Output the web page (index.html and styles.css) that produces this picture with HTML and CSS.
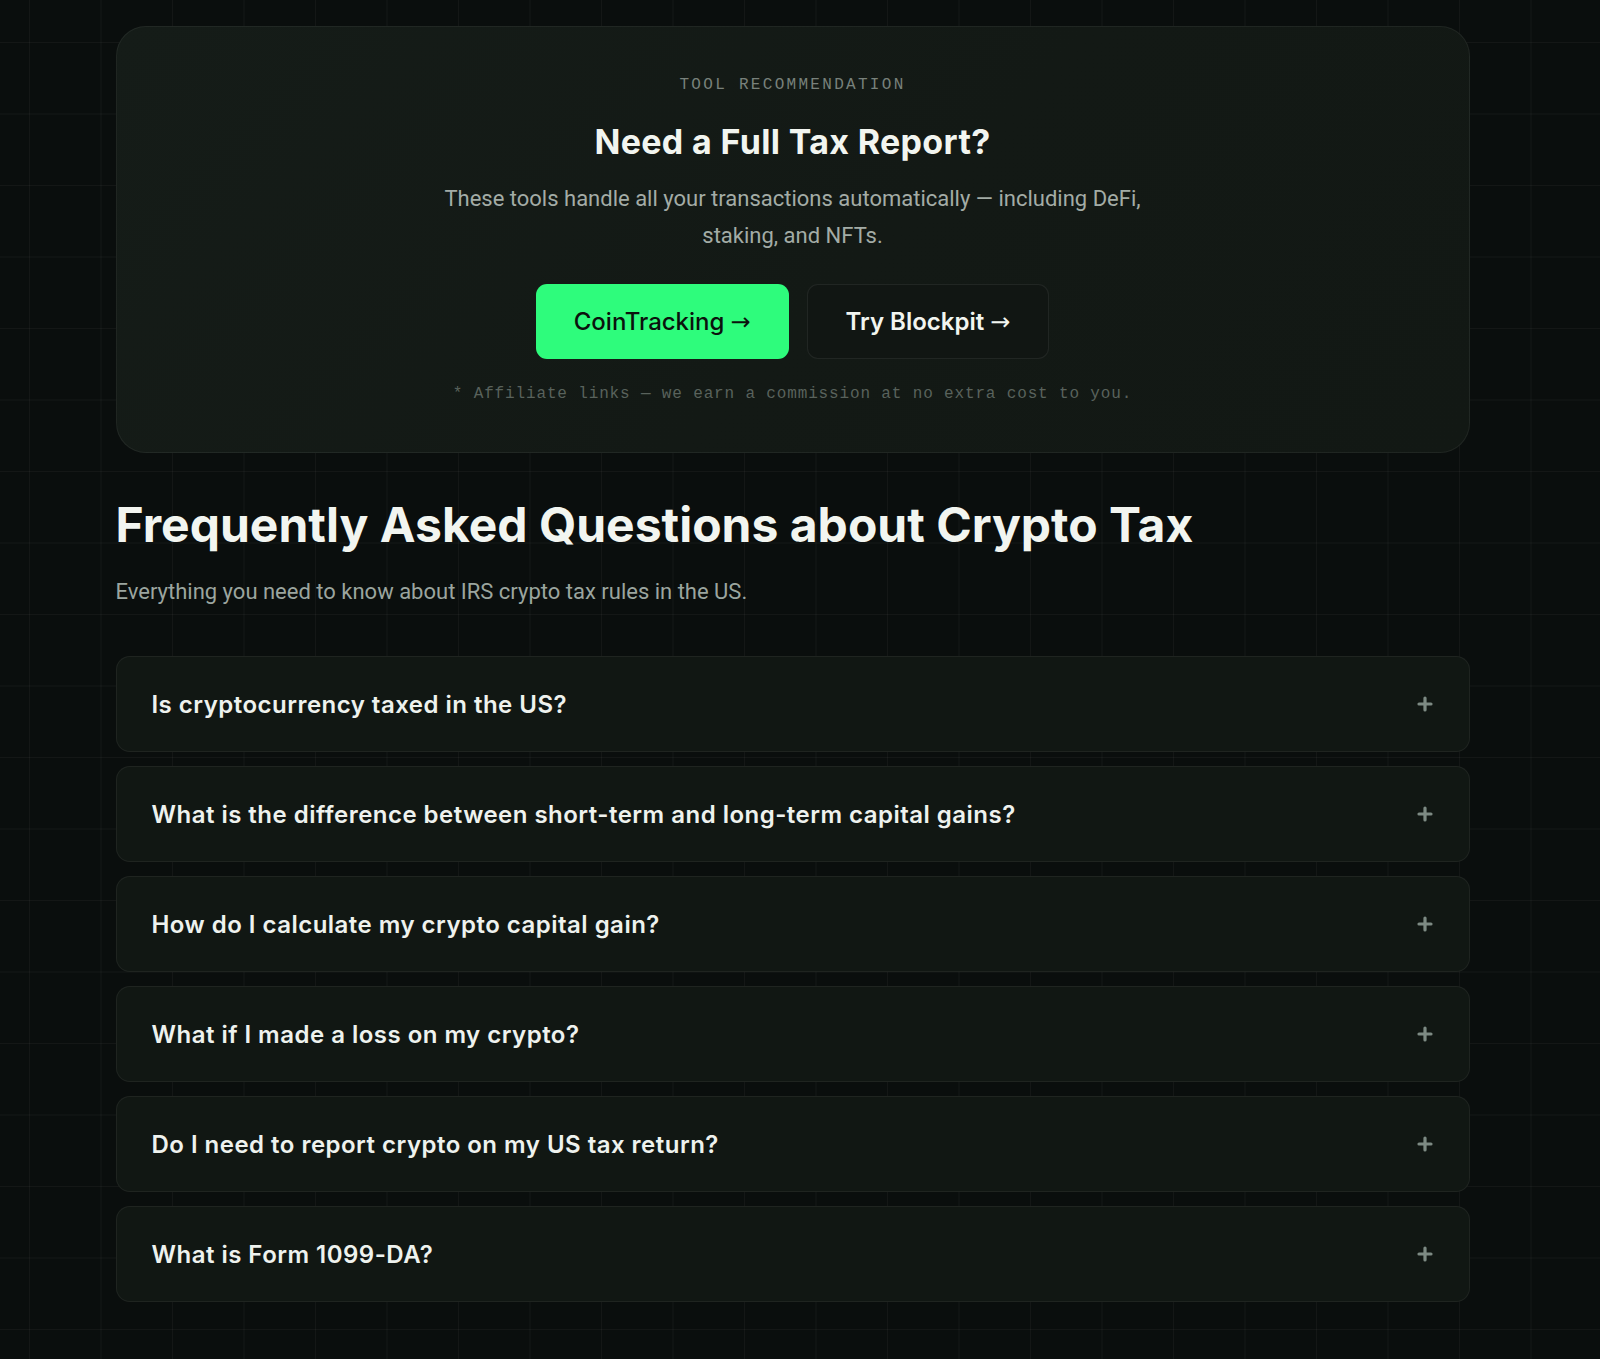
FILE: index.html
```html
<!DOCTYPE html>
<html lang="en">
<head>
  <meta charset="UTF-8">
  <meta name="viewport" content="width=device-width, initial-scale=1.0">
  <title>Crypto Tax FAQ</title>
  <link rel="stylesheet" href="styles.css">
</head>
<body>
  <div class="page">

    <section class="promo">
      <p class="promo-label">TOOL RECOMMENDATION</p>
      <h2 class="promo-title">Need a Full Tax Report?</h2>
      <p class="promo-text">These tools handle all your transactions automatically — including DeFi, staking, and NFTs.</p>
      <div class="promo-actions">
        <a href="#" class="btn btn-primary">CoinTracking <span class="arrow">→</span></a>
        <a href="#" class="btn btn-ghost">Try Blockpit <span class="arrow">→</span></a>
      </div>
      <p class="promo-note">* Affiliate links — we earn a commission at no extra cost to you.</p>
    </section>

    <section class="faq">
      <h2 class="faq-title">Frequently Asked Questions about Crypto Tax</h2>
      <p class="faq-sub">Everything you need to know about IRS crypto tax rules in the US.</p>

      <div class="faq-list">
        <div class="faq-item">
          <span class="faq-q">Is cryptocurrency taxed in the US?</span>
          <svg class="faq-plus" viewBox="0 0 16 16"><path d="M8 2v12M2 8h12"/></svg>
        </div>
        <div class="faq-item">
          <span class="faq-q">What is the difference between short-term and long-term capital gains?</span>
          <svg class="faq-plus" viewBox="0 0 16 16"><path d="M8 2v12M2 8h12"/></svg>
        </div>
        <div class="faq-item">
          <span class="faq-q">How do I calculate my crypto capital gain?</span>
          <svg class="faq-plus" viewBox="0 0 16 16"><path d="M8 2v12M2 8h12"/></svg>
        </div>
        <div class="faq-item">
          <span class="faq-q">What if I made a loss on my crypto?</span>
          <svg class="faq-plus" viewBox="0 0 16 16"><path d="M8 2v12M2 8h12"/></svg>
        </div>
        <div class="faq-item">
          <span class="faq-q">Do I need to report crypto on my US tax return?</span>
          <svg class="faq-plus" viewBox="0 0 16 16"><path d="M8 2v12M2 8h12"/></svg>
        </div>
        <div class="faq-item">
          <span class="faq-q">What is Form 1099-DA?</span>
          <svg class="faq-plus" viewBox="0 0 16 16"><path d="M8 2v12M2 8h12"/></svg>
        </div>
      </div>
    </section>

  </div>
</body>
</html>
```

FILE: styles.css
```css
html {
background-color: #0a0e0d;
}
body {
margin: 0;
padding: 26px 15px 0 0;
min-height: 1359px;
box-sizing: border-box;
font-family: Roboto, "Noto Sans", sans-serif;
color: #eef2ee;
background-color: #0a0e0d;
background-image:
  linear-gradient(rgba(255, 255, 255, 0.04) 1px, transparent 1px),
  linear-gradient(90deg, rgba(255, 255, 255, 0.04) 1px, transparent 1px);
background-size: 71.5px 71.5px;
background-position: 29px 42px;
}
a {
text-decoration: none;
}

.page {
width: 1354px;
margin: 0 auto;
}

/* tool recommendation card */
.promo {
background: linear-gradient(135deg, #151c18 0%, #131915 55%, #121814 100%);
border: 1px solid rgba(255, 255, 255, 0.06);
border-radius: 30px;
padding: 48px 48px 48px;
text-align: center;
}
.promo-label {
margin: 0;
font-family: "Liberation Mono", "DejaVu Sans Mono", monospace;
font-size: 16px;
line-height: 20px;
letter-spacing: 2.3px;
color: #78817b;
}
.promo-title {
margin: 27px 0 0;
font-family: Inter, sans-serif;
font-size: 34px;
line-height: 40px;
font-weight: 700;
letter-spacing: 0.01em;
color: #f2f5f0;
}
.promo-text {
max-width: 720px;
margin: 18px auto 0;
font-size: 22px;
line-height: 37px;
color: #a3aca6;
}
.promo-actions {
display: flex;
justify-content: center;
gap: 18px;
margin-top: 30px;
}
.btn {
display: flex;
align-items: center;
gap: 6px;
height: 75px;
box-sizing: border-box;
padding: 0 38px;
border-radius: 11px;
font-family: Inter, sans-serif;
font-size: 24px;
font-weight: 500;
}
.btn .arrow {
font-family: "DejaVu Sans", sans-serif;
font-weight: 400;
font-size: 24px;
}
.btn-primary {
background-color: #2efc7c;
color: #0b120d;
}
.btn-ghost {
background-color: #111613;
border: 1px solid rgba(255, 255, 255, 0.07);
color: #f2f5f0;
font-weight: 600;
}
.promo-note {
margin: 25px 0 0;
font-family: "Liberation Mono", "DejaVu Sans Mono", monospace;
font-size: 16px;
line-height: 20px;
letter-spacing: 0.85px;
color: #59625c;
}

/* faq */
.faq-title {
margin: 44px 0 0;
font-family: Inter, sans-serif;
font-size: 48px;
line-height: 56px;
font-weight: 700;
letter-spacing: 0;
color: #f2f5f0;
}
.faq-sub {
margin: 25px 0 0;
font-size: 22px;
line-height: 28px;
color: #9ba59f;
}
.faq-list {
display: flex;
flex-direction: column;
gap: 14px;
margin-top: 50px;
}
.faq-item {
display: flex;
align-items: center;
justify-content: space-between;
height: 96px;
box-sizing: border-box;
padding: 0 36px 0 35px;
background-color: #111713;
border: 1px solid rgba(255, 255, 255, 0.06);
border-radius: 14px;
}
.faq-q {
font-family: Inter, sans-serif;
font-size: 24px;
font-weight: 600;
letter-spacing: 0.02em;
color: #eef2ee;
}
.faq-plus {
width: 16px;
height: 16px;
flex-shrink: 0;
fill: none;
stroke: #7d8a83;
stroke-width: 3.2;
stroke-linecap: round;
}
```
